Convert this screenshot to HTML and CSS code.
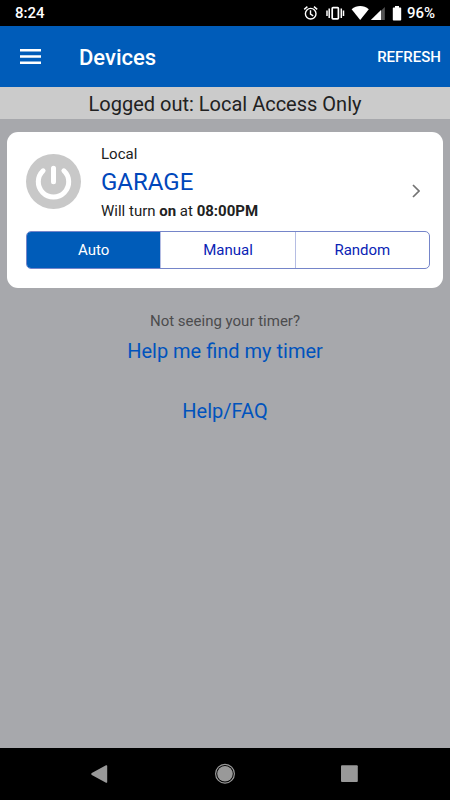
FILE: index.html
```html
<!DOCTYPE html>
<html lang="en">
<head>
<meta charset="utf-8">
<meta name="viewport" content="width=device-width, initial-scale=1">
<title>Devices</title>
<link rel="stylesheet" href="styles.css">
</head>
<body>
<div class="status-bar">
  <span>8:24</span>
  <div class="status-icons">
    <svg width="116" height="26" viewBox="0 0 116 26" aria-hidden="true">
      <g fill="none" stroke="#fff" stroke-width="1.4">
        <circle cx="20.7" cy="13.7" r="5.3"/>
        <path d="M20.5 10.3v3.8l2.7 1.7M14.2 9.4l3.2-2.8M27.2 9.4L24 6.6"/>
        <rect x="42.2" y="7.7" width="6.2" height="11.2" rx=".8" stroke-width="1.7"/>
        <path d="M39.2 8.5v9.6M51.3 8.5v9.6M37 10.5v5.6M53.5 10.5v5.6" stroke-width="1.5"/>
      </g>
      <path fill="#fff" d="M61.6 9.3c5-4.4 12.2-4.4 17.2 0L70.2 20z"/>
      <path fill="#555" d="M94.8 7v13h-13z"/>
      <path fill="#fff" d="M91 10V20H80.8z"/>
      <path fill="#fff" d="M105 6h4v1.5h1.4q.8 0 .8.8v11.4q0 .8-.8.8h-6.8q-.8 0-.8-.8V8.3q0-.8.8-.8h1.4z"/>
    </svg>
    <span>96%</span>
  </div>
</div>
<header class="app-bar">
  <button class="menu" type="button" aria-label="Menu">
    <svg width="21" height="15" viewBox="0 0 21 15" aria-hidden="true"><path fill="#fff" d="M0 0h21v2.4H0zM0 6.3h21v2.4H0zM0 12.6h21V15H0z"/></svg>
  </button>
  <h1 class="title">Devices</h1>
  <button class="refresh" type="button">REFRESH</button>
</header>
<div class="banner">Logged out: Local Access Only</div>
<main class="content">
  <section class="card">
    <div class="device">
      <button class="power" type="button" aria-label="Power">
        <svg width="55" height="55" viewBox="0 0 55 55" aria-hidden="true">
          <circle cx="27.5" cy="27.5" r="27.5" fill="#c8c8c8"/>
          <path d="M27.5 14.2v13.6M17.1 16.8a15.2 15.2 0 1 0 20.8 0" fill="none" stroke="#fff" stroke-width="5" stroke-linecap="round"/>
        </svg>
      </button>
      <div class="info">
        <div class="place">Local</div>
        <h2 class="name">GARAGE</h2>
        <div class="schedule">Will turn <b>on</b> at <b>08:00PM</b></div>
      </div>
      <button class="open" type="button" aria-label="Open GARAGE">
        <svg width="8" height="14" viewBox="0 0 8 14" aria-hidden="true"><path d="M1 1l6 6-6 6" fill="none" stroke="#737373" stroke-width="1.7"/></svg>
      </button>
    </div>
    <div class="modes">
      <button class="mode active" type="button" aria-pressed="true">Auto</button>
      <button class="mode" type="button" aria-pressed="false">Manual</button>
      <button class="mode" type="button" aria-pressed="false">Random</button>
    </div>
  </section>
  <p class="hint">Not seeing your timer?</p>
  <a class="link" href="#find">Help me find my timer</a>
  <a class="link faq" href="#faq">Help/FAQ</a>
</main>
<nav class="nav-bar">
  <button type="button" aria-label="Back"><svg width="24" height="24" viewBox="0 0 24 24" aria-hidden="true"><path fill="#999" d="M3.8 11.1L18 3.3q1.2-.5 1.2.8v15.8q0 1.3-1.2.8L3.8 12.9q-1.4-.9 0-1.8z"/></svg></button>
  <button type="button" aria-label="Home"><svg width="24" height="24" viewBox="0 0 24 24" aria-hidden="true"><circle cx="12" cy="11.8" r="9.4" fill="none" stroke="#999" stroke-width="1.2"/><circle cx="12" cy="11.8" r="7.8" fill="#999"/></svg></button>
  <button type="button" aria-label="Recent apps"><svg width="24" height="24" viewBox="0 0 24 24" aria-hidden="true"><rect x="3" y="3.3" width="16.8" height="16.8" rx="1" fill="#999"/></svg></button>
</nav>
</body>
</html>
```
FILE: styles.css
```css
* {
  box-sizing: border-box;
}

body {
  margin: 0;
  min-height: 100vh;
  display: flex;
  flex-direction: column;
  background: #a7a8ac;
  color: #212121;
  font-family: Roboto, sans-serif;
  font-size: 15px;
}

button {
  margin: 0;
  padding: 0;
  border: 0;
  background: none;
  color: inherit;
  font: inherit;
}

svg {
  display: block;
}

.status-bar {
  display: flex;
  justify-content: space-between;
  align-items: center;
  height: 26px;
  padding: 0 15px;
  background: #000;
  color: #fff;
  font-weight: 500;
}

.status-icons {
  display: flex;
  align-items: center;
  gap: 1px;
}

.app-bar {
  display: flex;
  align-items: center;
  height: 61px;
  padding: 0 9px 0 20px;
  background: #005cb9;
  color: #fff;
}

.title {
  flex: 1;
  margin: 0 0 0 38px;
  padding-top: 2px;
  font-size: 22px;
  font-weight: 500;
}

.refresh {
  font-weight: 500;
}

.banner {
  height: 32px;
  background: #cbcbcb;
  font-size: 20px;
  line-height: 34px;
  text-align: center;
}

.content {
  flex: 1;
  display: flex;
  flex-direction: column;
  align-items: center;
  padding: 13px 7px;
}

.card {
  align-self: stretch;
  padding: 12px 13px 19px 19px;
  border-radius: 11px;
  background: #fff;
}

.device {
  display: flex;
  align-items: center;
}

.power {
  padding-bottom: 2px;
}

.info {
  flex: 1;
  margin-left: 20px;
}

.place,
.schedule {
  line-height: 20px;
}

.name {
  margin: 0;
  color: #0047bb;
  font-size: 24px;
  font-weight: 400;
  line-height: 37px;
}

.open {
  padding: 16px 10px 0;
}

.modes {
  display: flex;
  margin-top: 10px;
  border: 1px solid #7585c9;
  border-radius: 5px;
  overflow: hidden;
}

.mode {
  flex: 1;
  height: 36px;
  border-left: 1px solid #b5bde3;
  color: #0a23b5;
}

.mode.active {
  border: 0;
  background: #005cb9;
  color: #fff;
}

.hint {
  margin: 23px 0 0;
  color: #4c4c4e;
  line-height: 20px;
}

.link {
  color: #0053bd;
  font-size: 20px;
  line-height: 40px;
  text-decoration: none;
}

.faq {
  margin-top: 20px;
}

.nav-bar {
  display: flex;
  justify-content: space-around;
  align-items: center;
  height: 52px;
  padding: 0 38px;
  background: #000;
}
```
